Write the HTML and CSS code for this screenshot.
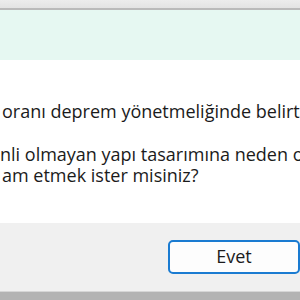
FILE: index.html
```html
<!DOCTYPE html>
<html lang="tr">
<head>
<meta charset="utf-8">
<link rel="stylesheet" href="styles.css">
</head>
<body>
<div class="screen">
  <div class="titlebar"></div>
  <div class="header"></div>
  <div class="content">
    <p class="line first">oranı deprem yönetmeliğinde belirtilen</p>
    <p class="line gap">nli olmayan yapı tasarımına neden olabilir.</p>
    <p class="line">am etmek ister misiniz?</p>
  </div>
  <div class="footer">
    <button class="btn">Evet</button>
  </div>
  <div class="bottom"></div>
</div>
</body>
</html>
```
FILE: styles.css
```css
html, body {
  margin: 0;
  padding: 0;
  width: 300px;
  height: 300px;
  overflow: hidden;
  background: #ffffff;
}
.screen {
  width: 300px;
  height: 300px;
  display: flex;
  flex-direction: column;
  font-family: "Open Sans", "DejaVu Sans", sans-serif;
  color: #1b1b1b;
}
.titlebar {
  height: 8px;
  background: linear-gradient(#ececec, #e3e3e3);
  border-bottom: 2px solid #bababa;
}
.header {
  height: 50px;
  background: #e6f8f2;
}
.content {
  flex: 1;
  background: #ffffff;
  padding-top: 41px;
  padding-left: 2px;
  overflow: hidden;
}
.line {
  margin: 0;
  font-size: 18px;
  line-height: 21px;
  white-space: nowrap;
  overflow: hidden;
}
.line.gap {
  margin-top: 22px;
  margin-left: -2px;
}
.footer {
  height: 69px;
  background: #f0f0f0;
  border-bottom: 1px solid #d6d6d6;
  display: flex;
  justify-content: flex-end;
  align-items: flex-start;
  padding-top: 17px;
  box-sizing: border-box;
}
.btn {
  width: 132px;
  height: 34px;
  margin: 0;
  border: 2px solid #1a7bd1;
  border-radius: 5px;
  background: #fdfdfd;
  font-family: "Open Sans", "DejaVu Sans", sans-serif;
  font-size: 18px;
  color: #1b1b1b;
  padding: 0 0 2px 0;
}
.bottom {
  height: 8px;
  background: #b3b3b3;
}
```
